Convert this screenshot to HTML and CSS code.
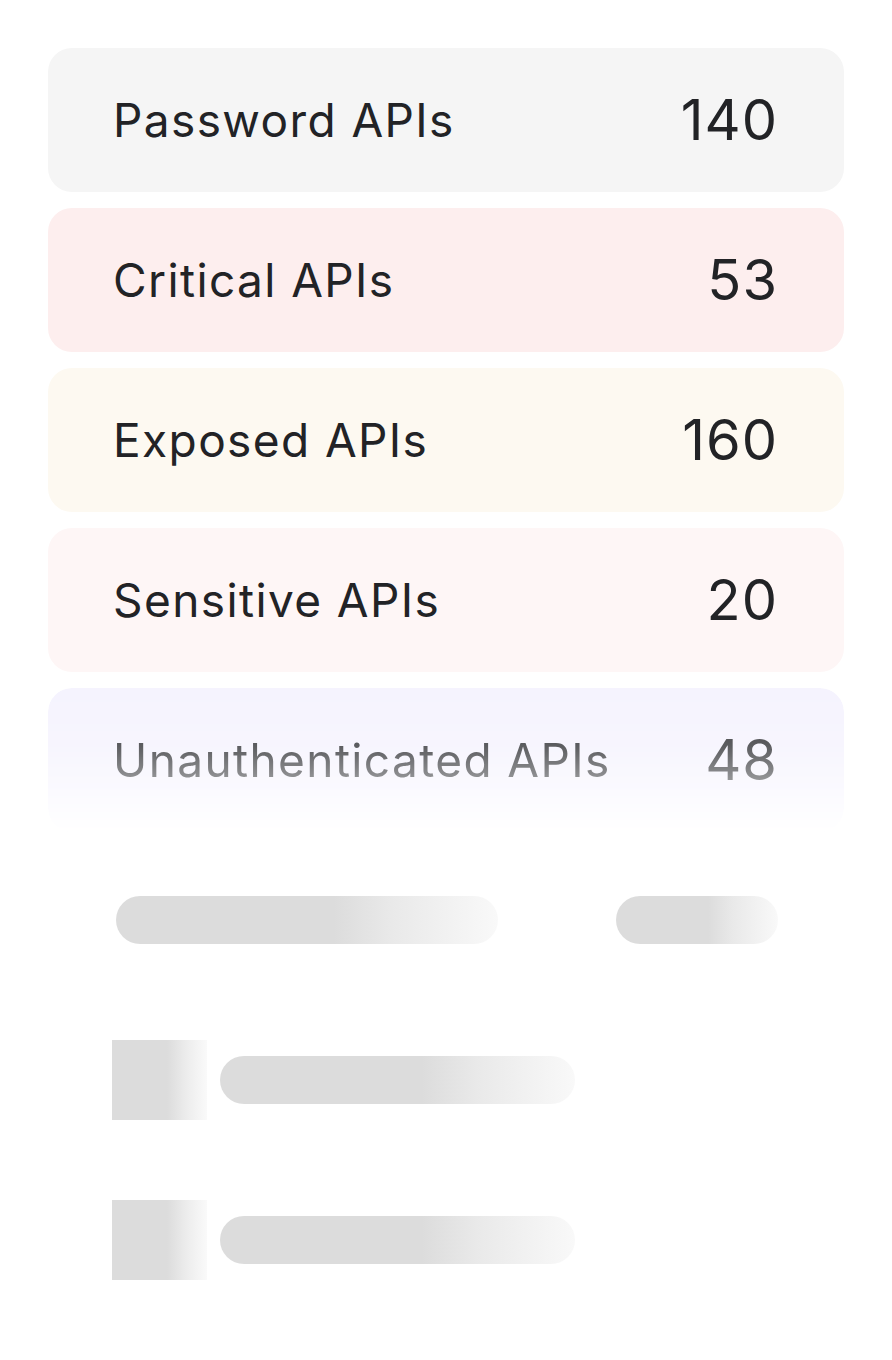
FILE: index.html
```html
<!DOCTYPE html>
<html lang="en">
<head>
<meta charset="utf-8">
<title>API Summary</title>
<link rel="stylesheet" href="styles.css">
</head>
<body>
<main class="list">
  <div class="card card-password"><span class="label">Password APIs</span><span class="count">140</span></div>
  <div class="card card-critical"><span class="label">Critical APIs</span><span class="count">53</span></div>
  <div class="card card-exposed"><span class="label">Exposed APIs</span><span class="count">160</span></div>
  <div class="card card-sensitive"><span class="label">Sensitive APIs</span><span class="count">20</span></div>
  <div class="card card-unauth"><span class="label">Unauthenticated APIs</span><span class="count">48</span></div>
  <div class="skeleton skeleton-a">
    <span class="bar bar-long"></span>
    <span class="bar bar-short"></span>
  </div>
  <div class="skeleton skeleton-b">
    <span class="block"></span>
    <span class="bar bar-mid"></span>
  </div>
  <div class="skeleton skeleton-b">
    <span class="block"></span>
    <span class="bar bar-mid"></span>
  </div>
</main>
</body>
</html>
```
FILE: styles.css
```css
html, body {
  margin: 0;
  padding: 0;
  background: #ffffff;
}
body {
  font-family: Inter, "Noto Sans", "Liberation Sans", sans-serif;
  color: #222326;
}
.list {
  padding: 48px 48px 0 48px;
  display: flex;
  flex-direction: column;
  gap: 16px;
}
.card {
  height: 144px;
  border-radius: 24px;
  box-sizing: border-box;
  padding: 0 66px 0 65px;
  display: flex;
  align-items: center;
  justify-content: space-between;
}
.label {
  font-size: 46px;
  font-weight: 400;
  letter-spacing: 1.4px;
}
.count {
  font-size: 56px;
  font-weight: 400;
  letter-spacing: 1px;
}
.card-password { background: #f5f5f5; }
.card-critical { background: #fdeeee; }
.card-exposed { background: #fdf9f1; }
.card-sensitive { background: #fef6f6; }
.card-unauth {
  background: #f5f3fe;
  color: #333438;
  -webkit-mask-image: linear-gradient(to bottom, #000 0%, rgba(0,0,0,0.8) 40%, rgba(0,0,0,0.45) 70%, rgba(0,0,0,0) 100%);
  mask-image: linear-gradient(to bottom, #000 0%, rgba(0,0,0,0.8) 40%, rgba(0,0,0,0.45) 70%, rgba(0,0,0,0) 100%);
}
.skeleton {
  height: 144px;
  display: flex;
  align-items: center;
  box-sizing: border-box;
}
.skeleton-a {
  padding: 0 66px 0 68px;
  justify-content: space-between;
}
.skeleton-b {
  padding: 0 0 0 64px;
  gap: 13px;
}
.bar {
  display: block;
  height: 48px;
  border-radius: 24px;
  background: linear-gradient(to right, #dcdcdc 0%, #dcdcdc 57%, #e9e9e9 72%, #f9f9f9 100%);
}
.bar-long { width: 382px; }
.bar-short { width: 162px; }
.bar-mid { width: 355px; }
.block {
  display: block;
  width: 95px;
  height: 80px;
  background: linear-gradient(to right, #dcdcdc 0%, #dcdcdc 58%, #ececec 78%, #fafafa 100%);
}
```
